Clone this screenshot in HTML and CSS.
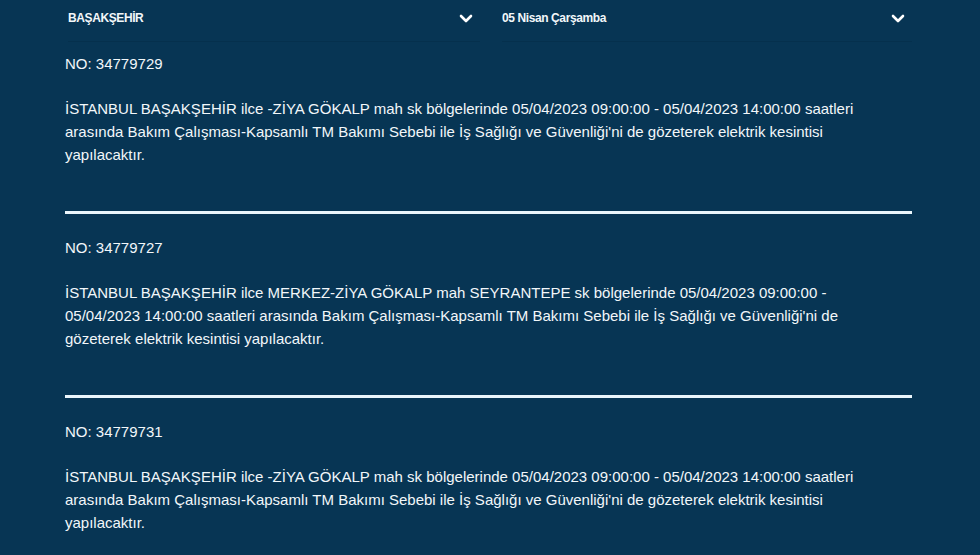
FILE: index.html
```html
<!DOCTYPE html>
<html lang="tr">
<head>
  <meta charset="UTF-8" />
  <meta name="viewport" content="width=device-width, initial-scale=1.0"/>
  <title>Planlı Elektrik Kesintileri</title>
  <link rel="stylesheet" href="styles.css">
</head>
<body>
  <div class="container">
    <div class="filters">
      <div class="select">
        <span>BAŞAKŞEHİR</span>
        <svg class="chevron" viewBox="0 0 14 9" width="14" height="9"><path d="M2 2l5 5 5-5" /></svg>
      </div>
      <div class="select">
        <span>05 Nisan Çarşamba</span>
        <svg class="chevron" viewBox="0 0 14 9" width="14" height="9"><path d="M2 2l5 5 5-5" /></svg>
      </div>
    </div>

    <div class="notice">
      <p class="notice-no">NO: 34779729</p>
      <p class="notice-text">İSTANBUL BAŞAKŞEHİR ilce -ZİYA GÖKALP mah sk bölgelerinde 05/04/2023 09:00:00 - 05/04/2023 14:00:00 saatleri arasında Bakım Çalışması-Kapsamlı TM Bakımı Sebebi ile İş Sağlığı ve Güvenliği'ni de gözeterek elektrik kesintisi yapılacaktır.</p>
    </div>

    <div class="notice">
      <p class="notice-no">NO: 34779727</p>
      <p class="notice-text">İSTANBUL BAŞAKŞEHİR ilce MERKEZ-ZİYA GÖKALP mah SEYRANTEPE sk bölgelerinde 05/04/2023 09:00:00 - 05/04/2023 14:00:00 saatleri arasında Bakım Çalışması-Kapsamlı TM Bakımı Sebebi ile İş Sağlığı ve Güvenliği'ni de gözeterek elektrik kesintisi yapılacaktır.</p>
    </div>

    <div class="notice">
      <p class="notice-no">NO: 34779731</p>
      <p class="notice-text">İSTANBUL BAŞAKŞEHİR ilce -ZİYA GÖKALP mah sk bölgelerinde 05/04/2023 09:00:00 - 05/04/2023 14:00:00 saatleri arasında Bakım Çalışması-Kapsamlı TM Bakımı Sebebi ile İş Sağlığı ve Güvenliği'ni de gözeterek elektrik kesintisi yapılacaktır.</p>
    </div>
  </div>
</body>
</html>
```

FILE: styles.css
```css
* {
  box-sizing: border-box;
}

body {
  margin: 0;
  background: #073554;
  color: #f2f7fa;
  font-family: "Liberation Sans", Arial, sans-serif;
}

.container {
  width: 847px;
  margin-left: 65px;
}

.filters {
  display: flex;
  gap: 22px;
  padding: 0 0 0 3px;
}

.select {
  flex: 0 0 412px;
  height: 42px;
  display: flex;
  align-items: center;
  justify-content: space-between;
  padding: 0 7px 5px 0;
  border-bottom: 1px solid #05304d;
  font-size: 12px;
  font-weight: bold;
  letter-spacing: -0.4px;
}

.select + .select {
  flex-basis: 410px;
}

.chevron {
  fill: none;
  stroke: #ffffff;
  stroke-width: 2.6;
  stroke-linecap: round;
  stroke-linejoin: round;
}

.notice {
  padding: 22px 0 45px;
  border-bottom: 3px solid #eaf6fc;
}

.filters + .notice {
  padding-top: 10px;
}

.notice p {
  margin: 0;
  font-size: 15px;
  line-height: 23px;
}

.notice-text {
  max-width: 836px;
  margin-top: 22px !important;
}
```
